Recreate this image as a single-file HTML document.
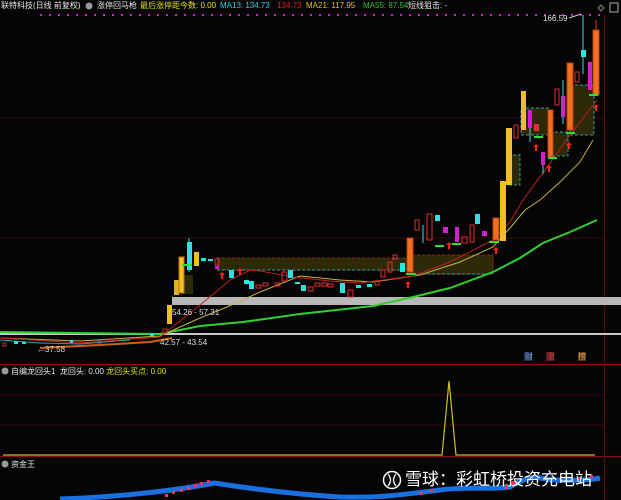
<!DOCTYPE html>
<html><head><meta charset="utf-8"><style>
html,body{margin:0;padding:0;background:#000;}
body{width:621px;height:500px;overflow:hidden;position:relative;font-family:"Liberation Sans","Noto Sans CJK SC",sans-serif;}
.t{position:absolute;font-size:8px;white-space:nowrap;line-height:11px;}
</style></head><body>
<svg width="621" height="500" style="position:absolute;left:0;top:0" xmlns="http://www.w3.org/2000/svg">
<rect width="621" height="500" fill="#050505"/>
<g stroke="#3a0808" stroke-width="1">
<line x1="0" y1="118" x2="604" y2="118"/><line x1="0" y1="238" x2="604" y2="238"/>
<line x1="0" y1="395" x2="604" y2="395"/><line x1="0" y1="425" x2="604" y2="425"/>
</g>
<line x1="0" y1="364.5" x2="621" y2="364.5" stroke="#8a1010"/>
<line x1="0" y1="456.5" x2="621" y2="456.5" stroke="#8a1010"/>
<line x1="604.5" y1="14" x2="604.5" y2="500" stroke="#5a0a0a"/>
<line x1="40" y1="15" x2="600" y2="15" stroke="#d020d0" stroke-width="2" stroke-dasharray="2,7"/>
<rect x="172" y="297" width="449" height="8" fill="#b8b8b8"/>
<rect x="0" y="333" width="621" height="2" fill="#c8c8c8"/>
<g stroke-dasharray="3,2" stroke-width="1">
<rect x="217" y="258" width="276" height="12" fill="#2e2a08" stroke="#7a3020"/>
<line x1="217" y1="270" x2="493" y2="270" stroke="#30a0a0"/>
<rect x="407" y="255" width="86" height="19" fill="#2e2a08" stroke="#7a3020"/>
<line x1="407" y1="274" x2="493" y2="274" stroke="#30a0a0"/>
<rect x="183" y="275" width="10" height="19" fill="#2e2a08"/>
<rect x="508" y="155" width="12" height="30" fill="#2e2a08" stroke="#30a0a0"/>
<rect x="521" y="108" width="28" height="27" fill="#2e2a08" stroke="#30a0a0"/>
<rect x="550" y="132" width="18" height="24" fill="#2e2a08" stroke="#30a0a0"/>
<rect x="570" y="85" width="24" height="50" fill="#2e2a08" stroke="#30a0a0"/>
</g>
<polyline fill="none" stroke="#30d030" stroke-width="2" points="0,332 80,333 160,334 200,326 243,322 300,314 373,306 413,297 450,288 493,272 520,258 543,243 570,232 597,220"/>
<polyline fill="none" stroke="#c8b040" stroke-width="1" points="0,338 80,341 160,336 200,318 227,307 260,292 300,276 340,280 373,282 420,275 460,262 493,247 510,228 525,210 540,200 560,182 580,162 593,140"/>
<polyline fill="none" stroke="#c02020" stroke-width="1" points="0,338 80,343 160,337 200,305 230,280 250,270 260,271 293,277 330,281 360,283 413,276 450,262 493,240 510,222 523,200 545,170 570,135 597,100"/>
<polyline fill="none" stroke="#30a0b0" stroke-width="1" points="0,340 40,343 80,344 130,340"/>
<polyline fill="none" stroke="#d06010" stroke-width="2" points="40,348 100,345 150,342 172,338"/>
<g fill="#30e0e0"><rect x="14" y="341" width="4" height="3"/><rect x="22" y="342" width="4" height="2"/><rect x="70" y="340" width="3" height="3"/><rect x="150" y="333" width="4" height="3"/></g>
<g fill="none" stroke="#c03030"><rect x="3" y="343" width="3" height="3"/><rect x="98" y="341" width="3" height="3"/><rect x="115" y="338" width="3" height="3"/><rect x="163" y="329" width="4" height="4"/></g>
<g>
<rect x="167" y="305" width="5" height="19" fill="#f0c020"/>
<rect x="174" y="280" width="5" height="15" fill="#e0b020"/>
<rect x="179" y="257" width="5" height="36" fill="#f0c020" stroke="#c07010"/>
<line x1="189" y1="238" x2="189" y2="272" stroke="#30e0e0"/><rect x="187" y="242" width="5" height="28" fill="#30e0e0"/>
<rect x="194" y="252" width="5" height="14" fill="#f0c020"/>
<rect x="201" y="258" width="5" height="3" fill="#30e0e0"/><rect x="208" y="259" width="5" height="2" fill="#30e0e0"/>
<rect x="215" y="259" width="4" height="6" fill="none" stroke="#e03030"/>
<rect x="215" y="266" width="4" height="3" fill="#d020d0"/><rect x="229" y="270" width="5" height="8" fill="#30e0e0"/>
<rect x="244" y="280" width="5" height="4" fill="#30e0e0"/><rect x="249" y="281" width="5" height="8" fill="#30e0e0"/>
<rect x="256" y="285" width="5" height="3" fill="none" stroke="#e03030"/>
<rect x="263" y="283" width="5" height="3" fill="none" stroke="#e03030"/>
<rect x="275" y="283" width="5" height="3" fill="none" stroke="#e03030"/>
<rect x="282" y="272" width="5" height="9" fill="none" stroke="#e03030"/>
<rect x="288" y="270" width="5" height="8" fill="#30e0e0"/>
<rect x="295" y="282" width="5" height="2" fill="#30e0e0"/><rect x="301" y="285" width="5" height="6" fill="#30e0e0"/>
<rect x="308" y="287" width="5" height="4" fill="none" stroke="#e03030"/>
<rect x="315" y="283" width="5" height="3" fill="none" stroke="#e03030"/>
<rect x="322" y="283" width="5" height="3" fill="none" stroke="#e03030"/>
<rect x="328" y="284" width="5" height="3" fill="none" stroke="#e03030"/>
<rect x="340" y="283" width="5" height="10" fill="#30e0e0"/>
<rect x="348" y="290" width="5" height="7" fill="none" stroke="#e03030"/>
<rect x="356" y="285" width="5" height="3" fill="#30e0e0"/><rect x="367" y="284" width="5" height="3" fill="#30e0e0"/>
<rect x="375" y="281" width="4" height="4" fill="none" stroke="#e03030"/>
<rect x="381" y="270" width="4" height="7" fill="none" stroke="#e03030"/>
<rect x="388" y="262" width="4" height="10" fill="none" stroke="#e03030"/>
<rect x="393" y="255" width="4" height="4" fill="none" stroke="#e03030"/>
<rect x="400" y="263" width="5" height="9" fill="#30e0e0"/>
<rect x="407" y="238" width="6" height="34" fill="#f07020" stroke="#c04010"/>
<rect x="415" y="220" width="4" height="10" fill="none" stroke="#e03030"/>
<line x1="423" y1="225" x2="423" y2="243" stroke="#30e0e0"/>
<rect x="427" y="214" width="5" height="26" fill="none" stroke="#e03030"/>
<rect x="435" y="215" width="5" height="6" fill="#30e0e0"/>
<rect x="443" y="227" width="5" height="6" fill="#d020d0"/>
<rect x="455" y="227" width="4" height="15" fill="#d020d0"/>
<rect x="462" y="237" width="5" height="6" fill="none" stroke="#e03030"/>
<rect x="470" y="225" width="4" height="17" fill="none" stroke="#e03030"/>
<rect x="475" y="214" width="5" height="10" fill="#30e0e0"/>
<rect x="482" y="231" width="5" height="5" fill="#d020d0"/>
<rect x="493" y="218" width="6" height="22" fill="#f07020" stroke="#c04010"/>
<rect x="500" y="181" width="6" height="60" fill="#f0c020"/>
<rect x="506" y="128" width="6" height="57" fill="#f0c020"/>
<rect x="514" y="125" width="4" height="13" fill="none" stroke="#e03030"/>
<rect x="521" y="91" width="5" height="39" fill="#f0c020"/>
<line x1="530" y1="110" x2="530" y2="142" stroke="#30e0e0"/><rect x="528" y="110" width="4" height="18" fill="#d020d0"/>
<rect x="534" y="124" width="5" height="7" fill="#e03030"/>
<line x1="543" y1="152" x2="543" y2="174" stroke="#30e0e0"/><rect x="541" y="152" width="4" height="13" fill="#d020d0"/>
<rect x="548" y="110" width="5" height="47" fill="#f07020" stroke="#c04010"/>
<rect x="555" y="89" width="4" height="16" fill="none" stroke="#e03030"/>
<line x1="563" y1="80" x2="563" y2="124" stroke="#30e0e0"/><rect x="561" y="96" width="4" height="21" fill="#d020d0"/>
<rect x="567" y="63" width="6" height="67" fill="#f07020" stroke="#c04010"/>
<rect x="575" y="72" width="4" height="10" fill="none" stroke="#e03030"/>
<line x1="583" y1="15" x2="583" y2="74" stroke="#30e0e0"/><rect x="581" y="50" width="5" height="7" fill="#30e0e0"/>
<rect x="588" y="62" width="4" height="28" fill="#d020d0"/>
<line x1="596" y1="20" x2="596" y2="32" stroke="#e03030"/><rect x="593" y="30" width="6" height="65" fill="#f07020" stroke="#c04010"/>
</g>
<g fill="#30e030"><rect x="182" y="264" width="10" height="2"/><rect x="489" y="241" width="10" height="2"/><rect x="534" y="136" width="9" height="2"/><rect x="548" y="157" width="9" height="2"/><rect x="566" y="132" width="9" height="2"/><rect x="589" y="94" width="9" height="2"/><rect x="435" y="245" width="9" height="2"/><rect x="452" y="243" width="9" height="2"/><rect x="406" y="273" width="10" height="2"/></g>
<g fill="#ff2020"><path d="M222,272l3,3h-2v4h-2v-4h-2z"/><path d="M408,281l3,3h-2v4h-2v-4h-2z"/><path d="M449,242l3,3h-2v4h-2v-4h-2z"/><path d="M496,247l3,3h-2v4h-2v-4h-2z"/><path d="M536,144l3,3h-2v4h-2v-4h-2z"/><path d="M549,165l3,3h-2v4h-2v-4h-2z"/><path d="M569,142l3,3h-2v4h-2v-4h-2z"/><path d="M596,104l3,3h-2v4h-2v-4h-2z"/><path d="M240,268l3,3h-2v4h-2v-4h-2z"/></g>
<line x1="569" y1="18" x2="581" y2="14" stroke="#ccc"/>
<polyline fill="none" stroke="#c8c020" stroke-width="1.2" points="3,455 442,455 449,381 456,455 595,455"/>
<path d="M60,499 C120,497 180,490 214,483 C240,487 290,494 340,497 C380,498 400,495 440,490 C470,486 490,490 510,487 C520,481 530,476 540,478 C560,482 590,480 600,478" fill="none" stroke="#1a70e0" stroke-width="5"/>
<g fill="#ff3060"><rect x="165" y="494" width="3" height="3"/><rect x="172" y="491" width="3" height="3"/><rect x="180" y="489" width="3" height="3"/><rect x="187" y="487" width="3" height="3"/><rect x="194" y="484" width="3" height="3"/><rect x="200" y="482" width="3" height="3"/><rect x="207" y="480" width="3" height="3"/><rect x="420" y="492" width="3" height="3"/><rect x="430" y="489" width="3" height="3"/><rect x="505" y="484" width="3" height="5"/><rect x="512" y="481" width="3" height="5"/><rect x="578" y="477" width="3" height="3"/><rect x="590" y="475" width="3" height="3"/></g>
<circle cx="392" cy="480" r="8.5" fill="none" stroke="#fff" stroke-width="1.5"/>
<path d="M388,474 q5,6 0,12 M396,474 q-5,6 0,12" fill="none" stroke="#fff" stroke-width="1.3"/>
<path d="M601,5 l3,3 -3,3 -3,-3z" fill="none" stroke="#888"/>
<rect x="610" y="3" width="8" height="9" fill="none" stroke="#aaa"/>
<rect x="524" y="352" width="8" height="9" fill="#203050"/><rect x="546" y="352" width="8" height="9" fill="#502020"/><rect x="578" y="352" width="8" height="9" fill="#503820"/>
<circle cx="89" cy="6" r="3.5" fill="#999"/><circle cx="5" cy="371" r="3.5" fill="#999"/><circle cx="5" cy="464" r="3.5" fill="#999"/>
</svg>
<div class="t" style="left:1px;top:0;color:#e8e8e8">联特科技(日线 前复权)</div>
<div class="t" style="left:97px;top:0;color:#e8e8e8">涨停回马枪</div>
<div class="t" style="left:140px;top:0;color:#e0e020">最后涨停距今数: 0.00</div>
<div class="t" style="left:220px;top:0;color:#30d0e0">MA13: 134.73</div>
<div class="t" style="left:277px;top:0;color:#e02020">134.73</div>
<div class="t" style="left:306px;top:0;color:#e0c020">MA21: 117.95</div>
<div class="t" style="left:363px;top:0;color:#30c030">MA55: 87.54</div>
<div class="t" style="left:408px;top:0;color:#e8e8e8">短线狙击: -</div>
<div class="t" style="left:543px;top:13px;color:#ddd">166.59</div>
<div class="t" style="left:172px;top:307px;color:#ddd">54.26 - 57.31</div>
<div class="t" style="left:160px;top:337px;color:#ddd">42.57 - 43.54</div>
<div class="t" style="left:37px;top:344px;color:#ddd">←37.58</div>
<div class="t" style="left:525px;top:351px;color:#80a0e0">财</div>
<div class="t" style="left:547px;top:351px;color:#e04040">涨</div>
<div class="t" style="left:578px;top:351px;color:#e0a040">榜</div>
<div class="t" style="left:11px;top:366px;color:#e8e8e8">自编龙回头1 &nbsp;龙回头: 0.00 <span style="color:#e0e020">龙回头买点: 0.00</span></div>
<div class="t" style="left:11px;top:459px;color:#e8e8e8">资金王</div>
<div class="t" style="left:405px;top:469px;color:#fff;font-size:17px;line-height:22px">雪球：彩虹桥投资充电站</div>
</body></html>
